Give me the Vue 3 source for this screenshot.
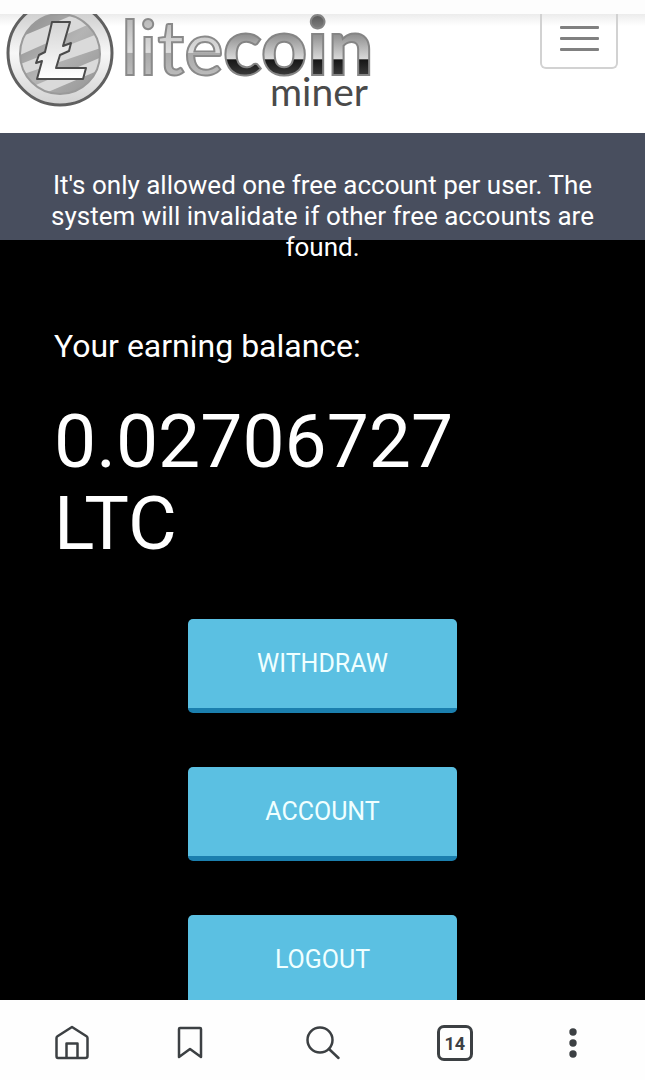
<script setup>
import { ref } from 'vue'

const balance = ref('0.02706727')
const currency = ref('LTC')
const tabCount = ref(14)

const actions = [
  { id: 'withdraw', label: 'WITHDRAW' },
  { id: 'account', label: 'ACCOUNT' },
  { id: 'logout', label: 'LOGOUT' }
]
</script>

<template>
  <div class="screen">
    <div class="status-strip"></div>

    <div class="page">
      <header class="header">
        <a class="brand" href="#" aria-label="litecoin miner">
          <svg class="logo" width="376" height="93" viewBox="0 14 376 93">
            <defs>
              <linearGradient id="ring" x1="0" y1="0" x2="0" y2="1">
                <stop offset="0" stop-color="#c4c4c4" />
                <stop offset="0.5" stop-color="#f7f7f7" />
                <stop offset="1" stop-color="#d2d2d2" />
              </linearGradient>
              <linearGradient id="face" x1="0" y1="0" x2="1" y2="1">
                <stop offset="0" stop-color="#8c8c8c" />
                <stop offset="0.5" stop-color="#b4b4b4" />
                <stop offset="1" stop-color="#949494" />
              </linearGradient>
              <linearGradient id="mark" x1="0" y1="0" x2="0" y2="1">
                <stop offset="0" stop-color="#d4d4d4" />
                <stop offset="1" stop-color="#ffffff" />
              </linearGradient>
              <linearGradient id="lite" gradientUnits="userSpaceOnUse" x1="0" y1="14" x2="0" y2="76">
                <stop offset="0" stop-color="#b4b4b4" />
                <stop offset="0.62" stop-color="#dedede" />
                <stop offset="0.63" stop-color="#a9a9a9" />
                <stop offset="1" stop-color="#bcbcbc" />
              </linearGradient>
              <linearGradient id="coin" gradientUnits="userSpaceOnUse" x1="0" y1="14" x2="0" y2="76">
                <stop offset="0" stop-color="#555555" />
                <stop offset="0.3" stop-color="#8a8a8a" />
                <stop offset="0.72" stop-color="#d8d8d8" />
                <stop offset="0.74" stop-color="#161616" />
                <stop offset="1" stop-color="#3c3c3c" />
              </linearGradient>
              <clipPath id="faceClip">
                <circle cx="60" cy="54" r="40" />
              </clipPath>
            </defs>

            <circle cx="60" cy="53" r="52" fill="url(#ring)" stroke="#606060" stroke-width="3" />
            <circle cx="60" cy="54" r="40" fill="url(#face)" />
            <g clip-path="url(#faceClip)" fill="#dadada">
              <path d="M18 38 L80 12 L94 22 L18 56 Z" />
              <path d="M18 65 L100 33 L104 47 L18 76 Z" />
              <path d="M24 90 L104 56 L104 68 L34 98 Z" />
            </g>
            <circle cx="60" cy="54" r="40" fill="none" stroke="#9a9a9a" stroke-width="2" />
            <path
              d="M52 22 L70 22 L63 46 L71 43 L69 51 L60 55 L56 68 L86 68 L83 79 L37 79 L42 61 L36 63 L39 55 L45 52 Z"
              fill="url(#mark)" stroke="#4b4b4b" stroke-width="2" stroke-linejoin="round"
            />

            <text class="lite" x="121" y="75">lite</text>
            <text class="coin" x="223" y="75">coin</text>
            <text class="miner" x="270" y="106">miner</text>
          </svg>
        </a>

        <button class="menu-button" type="button" aria-label="Menu">
          <span></span>
          <span></span>
          <span></span>
        </button>
      </header>

      <div class="notice">
        <p>It's only allowed one free account per user. The system will invalidate if other free accounts are found.</p>
      </div>

      <main class="content">
        <p class="balance-label">Your earning balance:</p>
        <p class="balance">
          <span>{{ balance }}</span>
          <span>{{ currency }}</span>
        </p>
        <div class="actions">
          <button v-for="item in actions" :key="item.id" class="action-button" type="button">
            {{ item.label }}
          </button>
        </div>
      </main>
    </div>

    <nav class="browser-bar">
      <button type="button" aria-label="Home">
        <svg width="34" height="36" viewBox="0 0 34 36">
          <path
            d="M3 33 Q1.500 33 1.500 31 V13 Q1.500 12 2.500 11.300 L17 2 L31.500 11.300 Q32.500 12 32.500 13 V31 Q32.500 33 30.500 33 Z M11.500 33 V18.500 H22.500 V33"
          />
        </svg>
      </button>
      <button type="button" aria-label="Bookmarks">
        <svg width="26" height="34" viewBox="0 0 26 34">
          <path d="M2 3 Q2 2 3 2 H23 Q24 2 24 3 V31 L13 23 L2 31 Z" />
        </svg>
      </button>
      <button class="search" type="button" aria-label="Search">
        <svg width="36" height="36" viewBox="0 0 36 36">
          <circle cx="15" cy="15" r="12.500" />
          <path d="M24 24 L33.500 33" />
        </svg>
      </button>
      <button class="tabs" type="button" aria-label="Tabs">{{ tabCount }}</button>
      <button type="button" aria-label="More">
        <svg class="dots" width="8" height="30" viewBox="0 0 8 30">
          <circle cx="4" cy="4" r="3.700" />
          <circle cx="4" cy="15" r="3.700" />
          <circle cx="4" cy="26" r="3.700" />
        </svg>
      </button>
    </nav>
  </div>
</template>

<style>
body{
  margin: 0;
  background-color: #000;
}
</style>

<style scoped>
.screen{
  display: flex;
  flex-direction: column;
  height: 100vh;
  overflow: hidden;
  font-family: Roboto, "Liberation Sans", sans-serif;
  color: #fff;
}

.screen p{
  margin: 0;
}

.screen button{
  font-family: inherit;
  box-sizing: border-box;
  cursor: pointer;
}

.status-strip{
  flex: none;
  height: 14px;
  background-color: #fdfdfd;
}

.page{
  flex: 1;
  min-height: 0;
  overflow: hidden;
  background-color: #000;
}

/* 顶部 */
.header{
  display: flex;
  justify-content: space-between;
  align-items: flex-start;
  height: 119px;
  padding-right: 27px;
  background: linear-gradient(#ececec, #fff 12px);
}

.logo{
  display: block;
}

.lite, .coin, .miner{
  font-family: Lato, sans-serif;
}

.lite{
  font-size: 75px;
  font-weight: 500;
  fill: url(#lite);
  stroke: #8a8a8a;
  stroke-width: 2px;
}

.coin{
  font-size: 80px;
  font-weight: 900;
  fill: url(#coin);
  stroke: #858585;
  stroke-width: 2px;
}

.miner{
  font-size: 39px;
  fill: #4a4a4a;
}

.menu-button{
  display: flex;
  flex-direction: column;
  align-items: center;
  gap: 8px;
  width: 78px;
  height: 55px;
  padding: 12px 0 0;
  background-color: transparent;
  border: 2px solid #d2d2d2;
  border-top: 0;
  border-radius: 0 0 6px 6px;
}

.menu-button span{
  width: 39px;
  height: 3px;
  border-radius: 1px;
  background-color: #808080;
}

/* 提示 */
.notice{
  height: 107px;
  box-sizing: border-box;
  padding: 37px 40px 0;
  background-color: #484e5e;
  font-size: 26px;
  line-height: 31px;
  text-align: center;
}

.content{
  padding: 86px 54px 0;
}

.balance-label{
  font-size: 32px;
  line-height: 40px;
}

.balance{
  padding-top: 34px;
  font-size: 75px;
  line-height: 82px;
}

.balance span{
  display: block;
}

.actions{
  display: flex;
  flex-direction: column;
  align-items: center;
  gap: 54px;
  padding-top: 55px;
}

.action-button{
  min-width: 269px;
  height: 94px;
  padding: 0 24px;
  color: #f0ffff;
  font-size: 25px;
  background-color: #5bc0e2;
  border: 0;
  border-bottom: 5px solid #1b7fae;
  border-radius: 5px;
}

.action-button:active{
  background-color: #46aed2;
}

/* 浏览器底栏 */
.browser-bar{
  flex: none;
  display: flex;
  justify-content: space-between;
  align-items: center;
  height: 80px;
  box-sizing: border-box;
  padding: 6px 54px 0;
  background-color: #fefefe;
}

.browser-bar button{
  width: 36px;
  padding: 0;
  background-color: transparent;
  border: 0;
}

.browser-bar .search{
  width: 64px;
}

.browser-bar svg{
  display: block;
  margin: 0 auto;
  fill: none;
  stroke: #3c4043;
  stroke-width: 2.5px;
  stroke-linecap: round;
  stroke-linejoin: round;
}

.browser-bar .dots{
  fill: #3c4043;
  stroke: none;
}

.browser-bar .tabs{
  height: 36px;
  color: #3c4043;
  font-size: 18px;
  font-weight: 700;
  border: 3px solid #3c4043;
  border-radius: 7px;
}
</style>
